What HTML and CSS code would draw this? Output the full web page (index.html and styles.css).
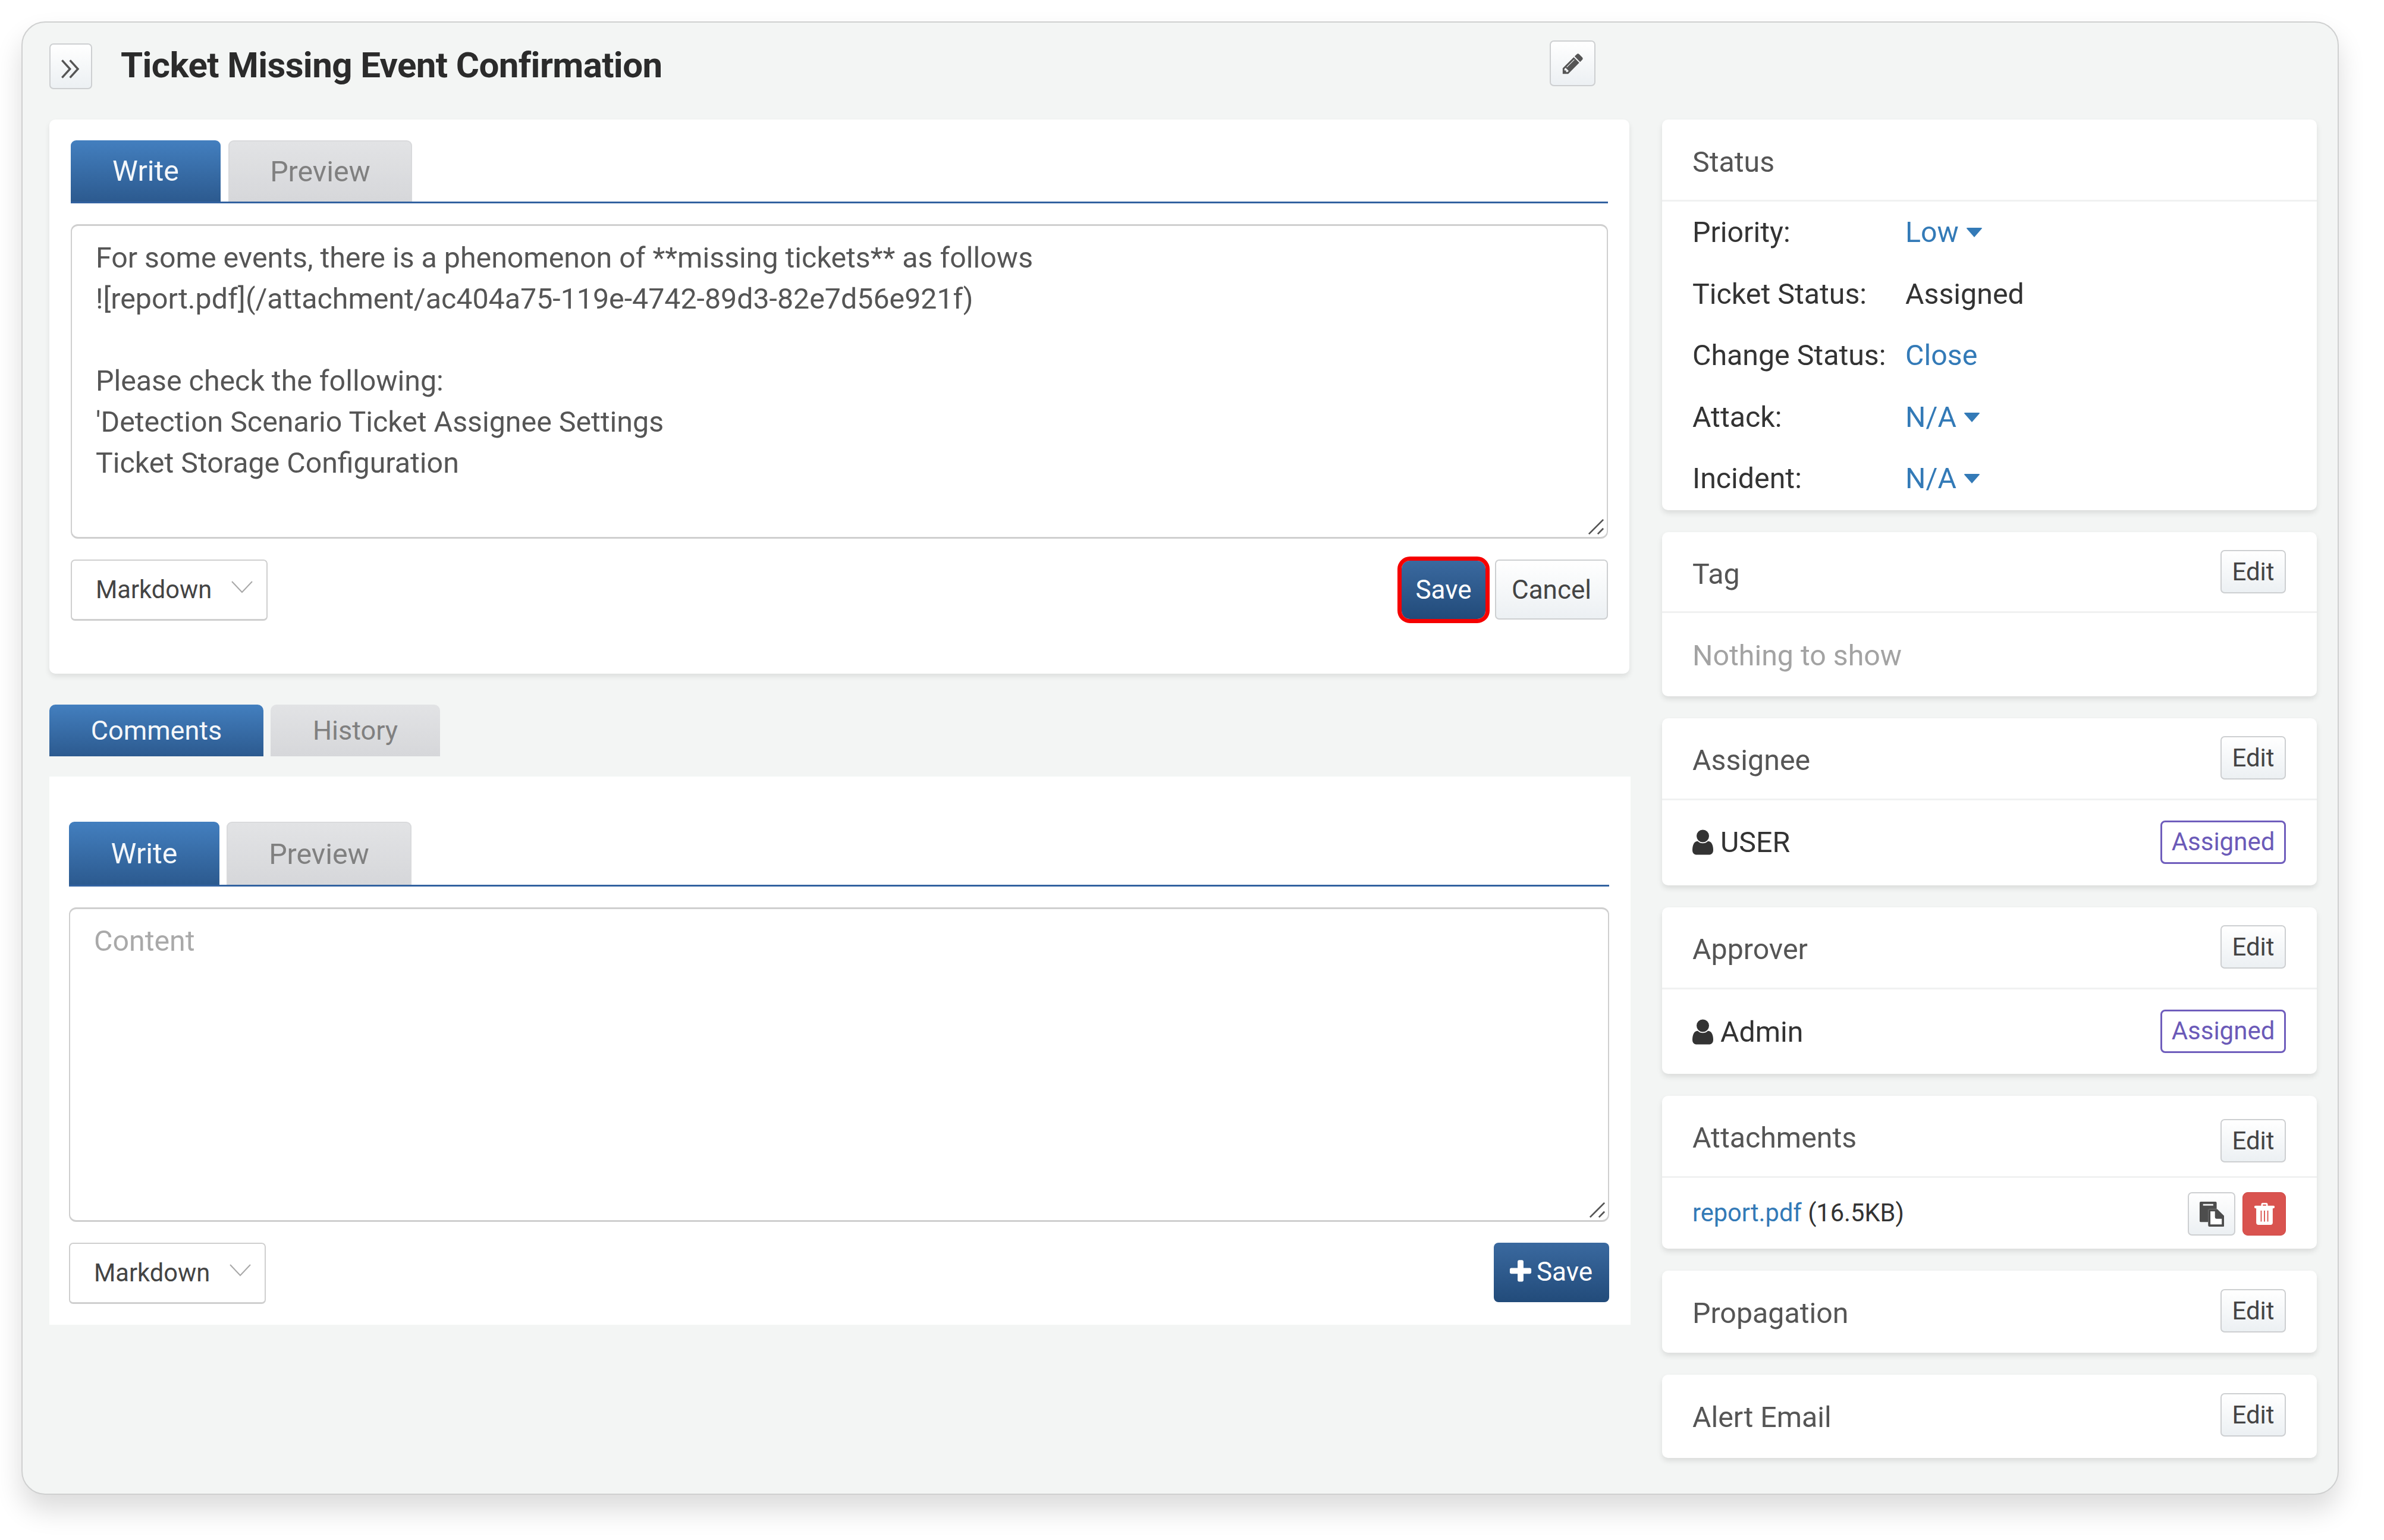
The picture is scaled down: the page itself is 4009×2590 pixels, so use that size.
FILE: index.html
```html
<!DOCTYPE html>
<html lang="en">
<head>
<meta charset="utf-8">
<title>Ticket Missing Event Confirmation</title>
<link rel="stylesheet" href="styles.css">
</head>
<body>
<main class="window">
  <header class="head">
    <button class="btn btn-toggle" type="button" aria-label="Collapse">
      <svg class="ico-chevrons" viewBox="0 0 30 30"><path d="M4 4l10 11-10 11M14 4l10 11-10 11"/></svg>
    </button>
    <h1 class="title">Ticket Missing Event Confirmation</h1>
    <button class="btn btn-pencil" type="button" aria-label="Edit title">
      <svg class="ico-pencil" viewBox="0 0 1792 1792"><path d="M491 1536l91-91-235-235-91 91v107h128v128h107zm523-928q0-22-22-22-10 0-17 7l-542 542q-7 7-7 17 0 22 22 22 10 0 17-7l542-542q7-7 7-17zm-54-192l416 416-832 832h-416v-416zm683 96q0 53-37 90l-166 166-416-416 166-165q36-38 90-38 53 0 91 38l235 234q37 39 37 91z"/></svg>
    </button>
  </header>

  <div class="columns">
    <section class="main">
      <div class="editor-card">
        <div class="tabs">
          <span class="tab tab-on">Write</span>
          <span class="tab tab-off">Preview</span>
        </div>
        <div class="editor">For some events, there is a phenomenon of **missing tickets** as follows
![report.pdf](/attachment/ac404a75-119e-4742-89d3-82e7d56e921f)

Please check the following:
'Detection Scenario Ticket Assignee Settings
Ticket Storage Configuration<svg class="grip" viewBox="0 0 30 30"><path d="M2 28L28 2M18 28l10-10"/></svg></div>
        <div class="editor-foot">
          <div class="select">Markdown<svg class="ico-down" viewBox="0 0 36 22"><path d="M1 2l17 18L35 2"/></svg></div>
          <div class="actions">
            <button class="btn btn-primary btn-outlined" type="button">Save</button>
            <button class="btn btn-cancel" type="button">Cancel</button>
          </div>
        </div>
      </div>

      <nav class="section-tabs">
        <span class="stab stab-on">Comments</span>
        <span class="stab stab-off">History</span>
      </nav>

      <div class="comment-panel">
        <div class="tabs tabs-comment">
          <span class="tab tab-on tab-w2">Write</span>
          <span class="tab tab-off tab-p2">Preview</span>
        </div>
        <div class="editor placeholder">Content<svg class="grip" viewBox="0 0 30 30"><path d="M2 28L28 2M18 28l10-10"/></svg></div>
        <div class="editor-foot">
          <div class="select">Markdown<svg class="ico-down" viewBox="0 0 36 22"><path d="M1 2l17 18L35 2"/></svg></div>
          <button class="btn btn-primary btn-add" type="button">
            <svg class="ico-plus" viewBox="0 0 1792 1792"><path d="M1600 736v192q0 40-28 68t-68 28h-416v416q0 40-28 68t-68 28h-192q-40 0-68-28t-28-68v-416h-416q-40 0-68-28t-28-68v-192q0-40 28-68t68-28h416v-416q0-40 28-68t68-28h192q40 0 68 28t28 68v416h416q40 0 68 28t28 68z"/></svg>Save
          </button>
        </div>
      </div>
    </section>

    <aside class="side">
      <section class="card card-status">
        <div class="card-head"><span class="card-title">Status</span></div>
        <dl class="props">
          <dt>Priority:</dt><dd><a class="link">Low<i class="caret caret-low"></i></a></dd>
          <dt>Ticket Status:</dt><dd>Assigned</dd>
          <dt>Change Status:</dt><dd><a class="link">Close</a></dd>
          <dt>Attack:</dt><dd><a class="link">N/A<i class="caret"></i></a></dd>
          <dt>Incident:</dt><dd><a class="link">N/A<i class="caret"></i></a></dd>
        </dl>
      </section>

      <section class="card card-tag">
        <div class="card-head"><span class="card-title">Tag</span><button class="btn btn-edit" type="button">Edit</button></div>
        <div class="card-row empty">Nothing to show</div>
      </section>

      <section class="card card-person">
        <div class="card-head"><span class="card-title">Assignee</span><button class="btn btn-edit" type="button">Edit</button></div>
        <div class="card-row">
          <span class="person"><svg class="ico-user" viewBox="0 0 1280 1792"><path d="M1280 1399q0 109-62.5 187t-150.5 78h-854q-88 0-150.5-78t-62.5-187q0-85 8.5-160.5t31.5-152 58.5-131 94-89 134.5-34.5q131 128 313 128t313-128q76 0 134.5 34.5t94 89 58.5 131 31.5 152 8.5 160.5zm-256-887q0 159-112.5 271.5t-271.5 112.5-271.5-112.5-112.5-271.5 112.5-271.5 271.5-112.5 271.5 112.5 112.5 271.5z"/></svg>USER</span>
          <span class="pill">Assigned</span>
        </div>
      </section>

      <section class="card card-person card-approver">
        <div class="card-head"><span class="card-title">Approver</span><button class="btn btn-edit" type="button">Edit</button></div>
        <div class="card-row">
          <span class="person"><svg class="ico-user" viewBox="0 0 1280 1792"><path d="M1280 1399q0 109-62.5 187t-150.5 78h-854q-88 0-150.5-78t-62.5-187q0-85 8.5-160.5t31.5-152 58.5-131 94-89 134.5-34.5q131 128 313 128t313-128q76 0 134.5 34.5t94 89 58.5 131 31.5 152 8.5 160.5zm-256-887q0 159-112.5 271.5t-271.5 112.5-271.5-112.5-112.5-271.5 112.5-271.5 271.5-112.5 271.5 112.5 112.5 271.5z"/></svg>Admin</span>
          <span class="pill">Assigned</span>
        </div>
      </section>

      <section class="card card-attach">
        <div class="card-head card-head-attach"><span class="card-title">Attachments</span><button class="btn btn-edit" type="button">Edit</button></div>
        <div class="card-row attach-row">
          <span class="file"><a class="link">report.pdf</a> (16.5KB)</span>
          <span class="file-actions">
            <button class="btn btn-copy" type="button" aria-label="Copy">
              <svg class="ico-files" viewBox="0 0 44 44"><path class="f-back" d="M3 0h26a2 2 0 0 1 2 2v11H19a3 3 0 0 0-3 3v20H3a2 2 0 0 1-2-2V2a2 2 0 0 1 2-2z"/><rect class="f-slot" x="7" y="4" width="18" height="3"/><path class="f-front" d="M19 15h11v10a3 3 0 0 0 3 3h8v13H19z"/><path class="f-back" d="M19 13h13l12 12v18a1 1 0 0 1-1 1H19a3 3 0 0 1-3-3V16a3 3 0 0 1 3-3zm1 4v23h20V30h-9a3 3 0 0 1-3-3V17z"/></svg>
            </button>
            <button class="btn btn-danger" type="button" aria-label="Delete">
              <svg class="ico-trash" viewBox="0 0 36 40"><path fill-rule="evenodd" d="M12 3a3 3 0 0 1 3-3h6a3 3 0 0 1 3 3v2h10a2 2 0 0 1 0 5h-1v26a4 4 0 0 1-4 4H7a4 4 0 0 1-4-4V10H2a2 2 0 0 1 0-5h10zm3 2h6V3h-6zm-4 9v20h2V14zm6 0v20h2V14zm6 0v20h2V14z"/></svg>
            </button>
          </span>
        </div>
      </section>

      <section class="card card-plain">
        <div class="card-head"><span class="card-title">Propagation</span><button class="btn btn-edit" type="button">Edit</button></div>
      </section>

      <section class="card card-plain card-last">
        <div class="card-head"><span class="card-title">Alert Email</span><button class="btn btn-edit" type="button">Edit</button></div>
      </section>
    </aside>
  </div>
</main>
</body>
</html>
```

FILE: styles.css
```css
* { box-sizing: border-box; }
html, body { margin: 0; background: #fff; }
body {
  min-height: 2590px;
  padding: 36px;
  font-family: Roboto, "Liberation Sans", sans-serif;
  font-size: 48.3px;
  color: #444;
}

.window {
  width: 3897px;
  height: 2478px;
  padding: 30px 35px 0 45px;
  background: #f3f5f4;
  border: 2px solid #cfd0d0;
  border-radius: 40px;
  box-shadow: 0 26px 46px rgba(0, 0, 0, .14);
}

.head {
  display: flex;
  align-items: flex-start;
  width: 2600px;
  height: 133px;
}
.title {
  margin: 0;
  padding: 7px 0 0 48px;
  font-size: 60px;
  line-height: 70px;
  font-weight: 700;
  color: #2b2b2b;
  letter-spacing: -.6px;
}

.btn {
  display: inline-flex;
  align-items: center;
  justify-content: center;
  padding: 0;
  font: inherit;
  color: #444;
  background: linear-gradient(#fff, #ecf0f3);
  border: 2px solid #cdcfd1;
  border-radius: 7px;
  cursor: pointer;
}
.btn-toggle { width: 72px; height: 77px; margin-top: 5px; flex: none; }
.btn-pencil { width: 77px; height: 77px; margin-left: auto; flex: none; }
.ico-chevrons { width: 40px; height: 40px; margin-top: 8px; }
.ico-chevrons path { fill: none; stroke: #555; stroke-width: 2.600; }
.ico-pencil { width: 40px; height: 40px; fill: #555; }

.columns {
  display: grid;
  grid-template-columns: 2659px 1101px;
  column-gap: 53px;
  align-items: start;
}

/* Left column */
.editor-card {
  height: 932px;
  margin-right: 2px;
  padding: 35px 36px 0;
  background: #fff;
  border-radius: 10px;
  box-shadow: 0 5px 10px rgba(0, 0, 0, .09);
}
.tabs {
  display: flex;
  gap: 13px;
  height: 106px;
  border-bottom: 3px solid #3262a0;
}
.tab {
  display: flex;
  align-items: center;
  justify-content: center;
  border-radius: 9px 9px 0 0;
}
.tab-on { width: 252px; color: #f4f7fa; background: linear-gradient(#437fbf, #2c5a8f); }
.tab-off {
  width: 309px;
  color: #808080;
  background: linear-gradient(#e2e3e5, #d6d7da);
  border: 2px solid #d9dadc;
  border-bottom: 0;
}
.tab-w2 { width: 253px; }
.tab-p2 { width: 311px; }

.editor {
  position: relative;
  height: 529px;
  margin-top: 35px;
  padding: 19px 40px;
  line-height: 69px;
  white-space: pre-wrap;
  color: #555;
  background: #fff;
  border: 2px solid #cfcfcf;
  border-top-width: 3px;
  border-bottom-width: 3px;
  border-radius: 12px;
}
.placeholder { color: #a9a9a9; }
.grip {
  position: absolute;
  right: 4px;
  bottom: 3px;
  width: 28px;
  height: 28px;
}
.grip path { fill: none; stroke: #555; stroke-width: 3; }

.editor-foot {
  display: flex;
  justify-content: space-between;
  align-items: flex-start;
  margin-top: 35px;
}
.select {
  display: flex;
  align-items: center;
  justify-content: space-between;
  width: 331px;
  height: 103px;
  padding: 0 23px 1px 40px;
  font-size: 41.600px;
  background: #fff;
  border: 2px solid #cfcfcf;
  border-bottom-width: 3px;
  border-radius: 7px;
}
.ico-down { width: 36px; height: 22px; margin-bottom: 10px; }
.ico-down path { fill: none; stroke: #a8a8a8; stroke-width: 2; }

.actions { display: flex; gap: 16px; align-items: center; height: 101px; }
.btn-primary {
  color: #fff;
  background: linear-gradient(#3a699f, #224b7a);
  border: 0;
  border-radius: 8px;
  font-size: 44px;
}
.btn-outlined {
  width: 141px;
  height: 98px;
  outline: 7px solid #f50000;
  border-radius: 14px;
}
.btn-cancel { width: 190px; height: 101px; font-size: 44px; }
.btn-add { width: 194px; height: 100px; padding-bottom: 3px; }
.ico-plus { width: 46px; height: 46px; fill: #fff; margin-right: 4px; margin-left: -6px; }

.section-tabs {
  display: flex;
  gap: 12px;
  height: 87px;
  margin-top: 52px;
  font-size: 45px;
}
.stab {
  display: flex;
  align-items: center;
  justify-content: center;
  border-radius: 10px 10px 0 0;
}
.stab-on { width: 360px; color: #f4f7fa; background: linear-gradient(#437fbf, #2c5a8f); }
.stab-off { width: 285px; color: #808080; background: linear-gradient(#e2e3e5, #d6d7da); }

.comment-panel {
  height: 922px;
  margin-top: 34px;
  padding: 76px 36px 0 33px;
  background: #fff;
}
.tabs-comment { height: 109px; gap: 12px; }

/* Right column */
.side { display: flex; flex-direction: column; gap: 37px; }
.card {
  background: #fff;
  border-radius: 10px;
  box-shadow: 0 5px 10px rgba(0, 0, 0, .1);
}
.card-status { height: 657px; }
.card-tag { height: 276px; }
.card-person { height: 281px; }
.card-approver { height: 280px; }
.card-attach { height: 257px; }
.card-plain { height: 138px; }
.card-last { height: 140px; }

.card-head {
  display: flex;
  justify-content: space-between;
  align-items: flex-start;
  height: 136px;
  padding: 30px 52px 0 51px;
  border-bottom: 3px solid #f0f1f1;
}
.card-status .card-head { height: 138px; }
.card-person .card-head, .card-attach .card-head { height: 138px; }
.card-plain .card-head { border-bottom: 0; padding-top: 31px; }
.card-head-attach { padding-top: 39px; }
.card-title { color: #555; line-height: 72px; padding-top: 5px; }
.card-status .card-title { line-height: 74px; }
.card-head-attach .card-title { margin-top: -9px; }
.btn-edit { width: 110px; height: 73px; font-size: 42px; }

.props {
  display: grid;
  grid-template-columns: 358px 1fr;
  grid-auto-rows: 103.500px;
  align-items: center;
  margin: 0;
  padding: 0 0 0 51px;
  color: #333;
}
.props dt, .props dd { margin: 0; }
.link { color: #337ab7; }
.caret {
  display: inline-block;
  margin: 0 0 6px 12px;
  vertical-align: middle;
  border-top: 16px solid #337ab7;
  border-left: 14.500px solid transparent;
  border-right: 14.500px solid transparent;
  border-radius: 3px;
}

.card-row {
  display: flex;
  justify-content: space-between;
  align-items: center;
  padding: 36px 52px 0 51px;
  color: #333;
}
.card-person .card-row { padding-top: 34px; }
.card-approver .person { padding-top: 2px; }
.empty { color: #a3a3a3; padding-top: 37px; line-height: 70px; }
.person { display: flex; align-items: center; }
.ico-user { width: 35px; height: 49px; margin-right: 12px; fill: #333; }
.pill {
  display: flex;
  align-items: center;
  justify-content: center;
  width: 211px;
  height: 73px;
  padding-bottom: 3px;
  font-size: 42px;
  color: #6b5ab8;
  border: 3px solid #6f5dbc;
  border-radius: 8px;
}
.attach-row { padding-top: 24px; font-size: 41.600px; }
.file { padding-bottom: 4px; }
.file-actions { display: flex; gap: 12px; }
.btn-copy { width: 80px; height: 73px; }
.btn-danger {
  width: 73px;
  height: 73px;
  background: #d9534f;
  border: 1px solid #cf4642;
  border-radius: 9px;
}
.ico-files { width: 42px; height: 42px; }
.f-back { fill: #4d4d4d; }
.f-slot { fill: #eee; }
.f-front { fill: #fff; }
.ico-trash { width: 34px; height: 37px; fill: #fff; }
```
